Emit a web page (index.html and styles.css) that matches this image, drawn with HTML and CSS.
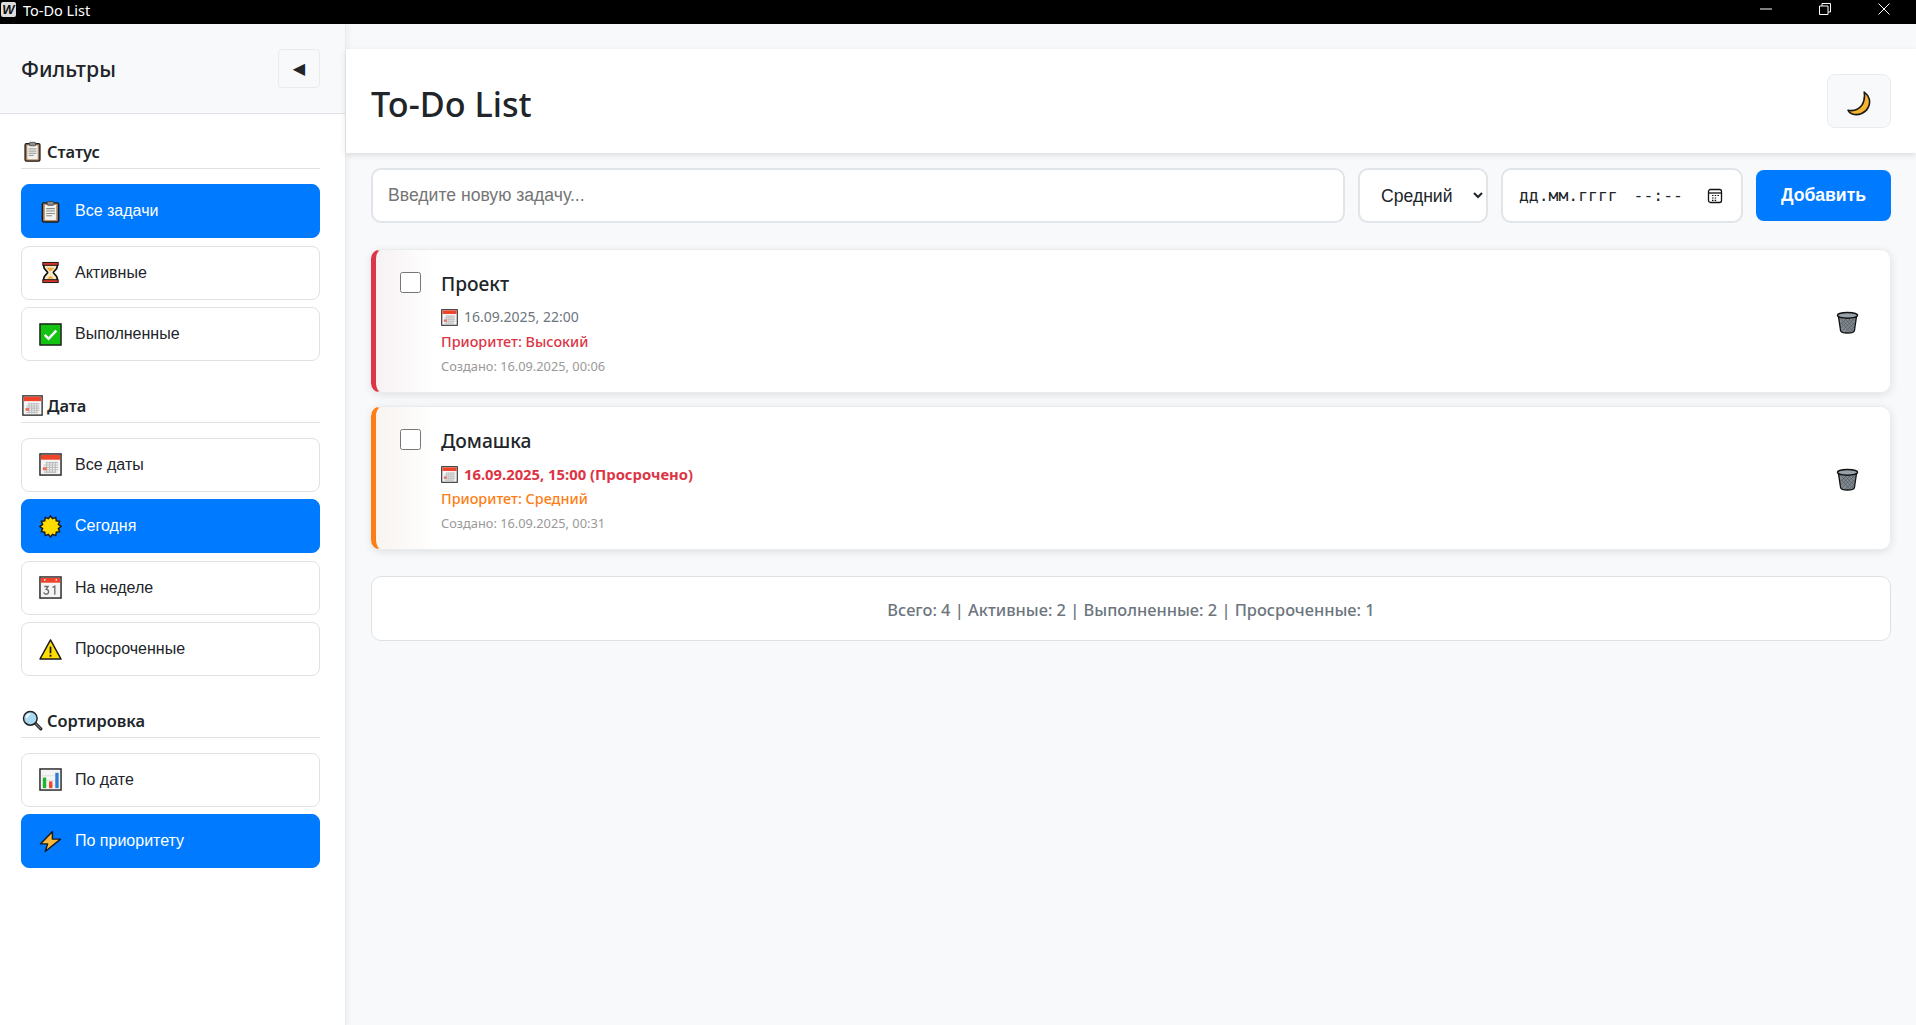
FILE: index.html
```html
<!DOCTYPE html>
<html lang="ru">
<head>
    <meta charset="UTF-8">
    <meta name="viewport" content="width=device-width, initial-scale=1.0">
    <title>To-Do List</title>
    <link rel="stylesheet" href="styles.css">
</head>
<body>
    <svg class="icon-defs" xmlns="http://www.w3.org/2000/svg">
        <symbol id="i-clipboard" viewBox="0 0 24 24">
            <rect x="3.500" y="3" width="17" height="20" rx="1.500" fill="#a9805a" stroke="#1c1c1c" stroke-width="1.500"/>
            <rect x="6" y="5" width="12" height="16" fill="#f2f2ee"/>
            <rect x="8.500" y="1.500" width="7" height="4" rx="1" fill="#8a8f94" stroke="#333" stroke-width=".8"/>
            <path d="M7.500 9h9M7.500 11.500h9M7.500 14h9M7.500 16.500h6" stroke="#8d8d8d" stroke-width="1.100"/>
        </symbol>
        <symbol id="i-hourglass" viewBox="0 0 24 24">
            <path d="M5 3h14v3c0 3-4 4.500-4 6s4 3 4 6v3H5v-3c0-3 4-4.500 4-6S5 9 5 6z" fill="#f6e7c6" stroke="#111" stroke-width="1.800"/>
            <rect x="4" y="1.500" width="16" height="3" fill="#d8362a" stroke="#111" stroke-width="1"/>
            <rect x="4" y="19.500" width="16" height="3" fill="#d8362a" stroke="#111" stroke-width="1"/>
            <path d="M8 7h8l-3 3.500h-2zM8.500 18.500l3.500-3 3.500 3z" fill="#f3a93a"/>
        </symbol>
        <symbol id="i-check" viewBox="0 0 24 24">
            <rect x="1" y="1" width="22" height="22" fill="#14c214" stroke="#1c1c1c" stroke-width="1.500"/>
            <path d="M6 12.500l4 4 8-8.500" fill="none" stroke="#fff" stroke-width="2.600"/>
        </symbol>
        <symbol id="i-calendar" viewBox="0 0 24 24">
            <rect x="1" y="1" width="22" height="22" fill="#f4f4f4" stroke="#262626" stroke-width="1.500"/>
            <rect x="2" y="2" width="20" height="5" fill="#f0442a"/>
            <path d="M7 10h13M5 12.500h15M5 15h15M5 17.500h15M5 20h13M8 9v12M11 9v12M14 9v12M17 9v12" stroke="#bdbdbd" stroke-width="1.200"/>
            <rect x="4" y="15" width="4" height="3" fill="#ee6a5a"/>
        </symbol>
        <symbol id="i-week" viewBox="0 0 24 24">
            <rect x="1" y="1" width="22" height="22" fill="#f4f4f4" stroke="#262626" stroke-width="1.500"/>
            <rect x="2" y="2" width="20" height="5" fill="#f0442a"/>
            <path d="M6 3v2M18 3v2" stroke="#fff" stroke-width="1.200"/>
            <path d="M5.500 11h4l-2 3c1.800 0 2.500 1 2.500 2.500s-1 2.500-2.500 2.500-2.300-.8-2.500-1.800M14 12l2.500-1.500V19.500" fill="none" stroke="#6d6d6d" stroke-width="1.400"/>
        </symbol>
        <symbol id="i-sun" viewBox="0 0 24 24">
            <polygon fill="#ffdc00" stroke="#1a1a1a" stroke-width="1.500" points="23,12 20.200,14.200 21.500,17.500 18,18 17.500,21.500 14.200,20.200 12,23 9.800,20.200 6.500,21.500 6,18 2.500,17.500 3.800,14.200 1,12 3.800,9.800 2.500,6.500 6,6 6.500,2.500 9.800,3.800 12,1 14.200,3.800 17.500,2.500 18,6 21.500,6.500 20.200,9.800"/>
        </symbol>
        <symbol id="i-warning" viewBox="0 0 24 24">
            <path d="M12 2l11 20H1z" fill="#ffdd00" stroke="#1a1a1a" stroke-width="1.500" stroke-linejoin="round"/>
            <path d="M12 9v7" stroke="#1a1a1a" stroke-width="1.800"/>
            <rect x="11" y="17.500" width="2" height="2" fill="#1a1a1a"/>
        </symbol>
        <symbol id="i-search" viewBox="0 0 24 24">
            <path d="M14.500 14.500l7 7" stroke="#222" stroke-width="3.600" stroke-linecap="round"/>
            <path d="M15 15l6 6" stroke="#7a7f85" stroke-width="1.400" stroke-linecap="round"/>
            <circle cx="9.500" cy="9.500" r="7.800" fill="#a9d9f2" stroke="#222" stroke-width="1.700"/>
            <path d="M5 9c.5-2.500 2-4 4.500-4.500" fill="none" stroke="#fff" stroke-width="1.800"/>
        </symbol>
        <symbol id="i-chart" viewBox="0 0 24 24">
            <rect x="1" y="1" width="22" height="22" fill="#f4f4f4" stroke="#262626" stroke-width="1.500"/>
            <path d="M3 8h18M3 13h18M3 18h18" stroke="#dcdcdc" stroke-width=".8"/>
            <rect x="4" y="10" width="3.500" height="11" fill="#1cb52c"/>
            <rect x="10.500" y="14" width="3.500" height="7" fill="#ee4527"/>
            <rect x="17" y="5" width="3.500" height="16" fill="#2a7fd0"/>
        </symbol>
        <symbol id="i-bolt" viewBox="0 0 24 24">
            <path d="M14 1.500L1.500 14.500h7.500L6.500 22.500 22.500 9.500h-8.500z" fill="#f9b93a" stroke="#1a1a1a" stroke-width="1.500" stroke-linejoin="round"/>
        </symbol>
        <symbol id="i-moon" viewBox="0 0 24 24">
            <path d="M16.500 1c5 3.500 6.500 9.500 4 14.500C18 21 11 24 5 22c-2-.7-3.500-2-4-3.500 5 1 10-.5 13-4.500 2.500-3.500 3.200-8.500 2.500-13z" fill="#f6b42f" stroke="#1a1a1a" stroke-width="1.500" stroke-linejoin="round"/>
        </symbol>
        <symbol id="i-trash" viewBox="0 0 24 24">
            <path d="M2.500 5l2.300 15.500c.3 1.500 3.500 2.500 7.200 2.500s6.900-1 7.200-2.500L21.500 5z" fill="#808990" stroke="#111" stroke-width="1.400"/>
            <path d="M5 8l13 13M9 8l11 11M13 8l7 7M17 8l3 3M5 12l10 10M19 8L6 21M15 8L4.500 18.500M11 8l-6 6M19.500 12L9 22.500M19.500 16l-6 6.500" stroke="#4b5156" stroke-width=".6"/>
            <ellipse cx="12" cy="4.500" rx="10.500" ry="3" fill="#98a1a8" stroke="#111" stroke-width="1.500"/>
        </symbol>
    </svg>

    <div class="titlebar">
        <div class="titlebar-name">
            <span class="app-logo">W</span>
            <span>To-Do List</span>
        </div>
        <div class="win-controls">
            <svg class="win-icon" viewBox="0 0 12 12"><path d="M0 6h12" stroke="#fff" fill="none"/></svg>
            <svg class="win-icon" viewBox="0 0 12 12"><path d="M.5 3h8.500v8.500H.5zM3 3V.5h8.500V9H9" stroke="#fff" fill="none"/></svg>
            <svg class="win-icon" viewBox="0 0 12 12"><path d="M.5.500l11 11M11.500.500l-11 11" stroke="#fff" fill="none"/></svg>
        </div>
    </div>

    <div class="app">
        <aside class="sidebar">
            <div class="sidebar-head">
                <h2>Фильтры</h2>
                <button class="collapse-btn" type="button">◀</button>
            </div>
            <div class="sidebar-body">
                <section class="filter-group">
                    <h3><svg class="emoji-sm"><use href="#i-clipboard"/></svg>Статус</h3>
                    <button class="filter-btn active" type="button"><svg class="emoji"><use href="#i-clipboard"/></svg>Все задачи</button>
                    <button class="filter-btn" type="button"><svg class="emoji"><use href="#i-hourglass"/></svg>Активные</button>
                    <button class="filter-btn" type="button"><svg class="emoji"><use href="#i-check"/></svg>Выполненные</button>
                </section>
                <section class="filter-group">
                    <h3><svg class="emoji-sm"><use href="#i-calendar"/></svg>Дата</h3>
                    <button class="filter-btn" type="button"><svg class="emoji"><use href="#i-calendar"/></svg>Все даты</button>
                    <button class="filter-btn active" type="button"><svg class="emoji"><use href="#i-sun"/></svg>Сегодня</button>
                    <button class="filter-btn" type="button"><svg class="emoji"><use href="#i-week"/></svg>На неделе</button>
                    <button class="filter-btn" type="button"><svg class="emoji"><use href="#i-warning"/></svg>Просроченные</button>
                </section>
                <section class="filter-group">
                    <h3><svg class="emoji-sm"><use href="#i-search"/></svg>Сортировка</h3>
                    <button class="filter-btn" type="button"><svg class="emoji"><use href="#i-chart"/></svg>По дате</button>
                    <button class="filter-btn active" type="button"><svg class="emoji"><use href="#i-bolt"/></svg>По приоритету</button>
                </section>
            </div>
        </aside>

        <main class="main">
            <header class="page-head">
                <h1>To-Do List</h1>
                <button class="theme-btn" type="button"><svg class="emoji"><use href="#i-moon"/></svg></button>
            </header>

            <div class="content">
                <form class="task-form">
                    <input class="task-input" type="text" placeholder="Введите новую задачу...">
                    <select class="task-priority">
                        <option>Высокий</option>
                        <option selected>Средний</option>
                        <option>Низкий</option>
                    </select>
                    <div class="task-date">
                        <span>дд.мм.гггг --:--</span>
                        <svg class="date-icon" viewBox="0 0 16 16">
                            <rect x="1.500" y="1.500" width="13" height="13" rx="2" fill="none" stroke="#111" stroke-width="1.300"/>
                            <path d="M2 5h12" stroke="#111" stroke-width="1.300"/>
                            <path d="M5 7.500h1.500M7.700 7.500h1.500M10.400 7.500h1.500M5 10h1.500M7.700 10h1.500M5 12.300h1.500M7.700 12.300h1.500" stroke="#111" stroke-width="1.200"/>
                        </svg>
                    </div>
                    <button class="add-btn" type="button">Добавить</button>
                </form>

                <div class="task high">
                    <input class="task-check" type="checkbox">
                    <div class="task-info">
                        <div class="task-title">Проект</div>
                        <div class="task-deadline"><svg class="emoji-xs"><use href="#i-calendar"/></svg>16.09.2025, 22:00</div>
                        <div class="task-level">Приоритет: Высокий</div>
                        <div class="task-created">Создано: 16.09.2025, 00:06</div>
                    </div>
                    <button class="delete-btn" type="button"><svg class="emoji"><use href="#i-trash"/></svg></button>
                </div>

                <div class="task medium">
                    <input class="task-check" type="checkbox">
                    <div class="task-info">
                        <div class="task-title">Домашка</div>
                        <div class="task-deadline overdue"><svg class="emoji-xs"><use href="#i-calendar"/></svg>16.09.2025, 15:00 (Просрочено)</div>
                        <div class="task-level">Приоритет: Средний</div>
                        <div class="task-created">Создано: 16.09.2025, 00:31</div>
                    </div>
                    <button class="delete-btn" type="button"><svg class="emoji"><use href="#i-trash"/></svg></button>
                </div>

                <div class="stats">Всего: 4 | Активные: 2 | Выполненные: 2 | Просроченные: 1</div>
            </div>
        </main>
    </div>
</body>
</html>
```

FILE: styles.css
```css
* {
    box-sizing: border-box;
}

body {
    margin: 0;
    height: 1025px;
    overflow: hidden;
    display: flex;
    flex-direction: column;
    font-family: "Noto Sans", "Open Sans", sans-serif;
    background-color: #f8f9fa;
    color: #212529;
}

.icon-defs {
    display: none;
}

.titlebar {
    height: 24px;
    flex: none;
    background-color: #000;
    color: #fff;
    display: flex;
    justify-content: space-between;
    font-size: 14.5px;
}

.titlebar-name {
    display: flex;
    align-items: center;
    gap: 7px;
    padding-left: 1px;
    padding-bottom: 5px;
}

.app-logo {
    width: 15px;
    height: 15px;
    background-color: #ddd;
    color: #111;
    font: italic bold 13px/15px "Liberation Sans", sans-serif;
    text-align: center;
    border-radius: 2px;
}

.win-controls {
    display: flex;
    gap: 47px;
    padding: 3px 26px 0 0;
}

.win-icon {
    width: 12px;
    height: 12px;
}

.app {
    flex: 1;
    display: flex;
    min-height: 0;
}

.sidebar {
    width: 346px;
    flex: none;
    background-color: #fff;
    border-right: 1px solid #e9ecef;
    box-shadow: 2px 0 6px rgba(0, 0, 0, 0.05);
}

.sidebar-head {
    height: 90px;
    padding: 0 25px 0 21px;
    background-color: #f8f9fa;
    border-bottom: 1px solid #dee2e6;
    display: flex;
    align-items: center;
    justify-content: space-between;
}

.sidebar-head h2 {
    margin: 0;
    font-size: 21.3px;
    font-weight: 500;
}

.collapse-btn {
    width: 42px;
    height: 39px;
    padding: 0;
    background-color: #f8f9fa;
    border: 1px solid #e9ecef;
    border-radius: 4px;
    color: #212529;
    font: 16px "DejaVu Sans", sans-serif;
}

.sidebar-body {
    padding: 27px 25px 0 21px;
    display: flex;
    flex-direction: column;
    gap: 33.5px;
}

.filter-group {
    display: flex;
    flex-direction: column;
    gap: 7.5px;
}

.filter-group h3 {
    height: 28px;
    margin: 0 0 7.5px;
    padding: 0 0 6px 1px;
    border-bottom: 1px solid #dee2e6;
    display: flex;
    align-items: center;
    gap: 4px;
    font-size: 16.4px;
    font-weight: 600;
}

.emoji-sm {
    width: 21px;
    height: 21px;
    flex: none;
}

.emoji {
    width: 23px;
    height: 23px;
    flex: none;
}

.emoji-xs {
    width: 17px;
    height: 17px;
    flex: none;
}

.filter-btn {
    height: 54px;
    padding: 0 0 0 17px;
    background-color: #fff;
    border: 1px solid #dee2e6;
    border-radius: 8px;
    color: #212529;
    display: flex;
    align-items: center;
    gap: 13px;
    font: 16px "Liberation Sans", sans-serif;
}

.filter-btn.active {
    background-color: #007bff;
    border-color: #007bff;
    color: #fff;
}

.main {
    flex: 1;
    min-width: 0;
    padding-top: 25px;
}

.page-head {
    height: 104px;
    padding: 0 25px;
    background-color: #fff;
    box-shadow: 0 2px 6px rgba(0, 0, 0, 0.12);
    display: flex;
    align-items: center;
    justify-content: space-between;
}

.page-head h1 {
    margin: 0;
    padding-top: 5px;
    font-size: 34.2px;
    font-weight: 500;
}

.theme-btn {
    width: 64px;
    height: 54px;
    padding: 4px 0 0;
    background-color: #f8f9fa;
    border: 1px solid #e9ecef;
    border-radius: 8px;
    display: flex;
    align-items: center;
    justify-content: center;
}

.theme-btn .emoji {
    width: 25px;
    height: 25px;
}

.content {
    padding: 15px 25px 0;
}

.task-form {
    display: flex;
    align-items: center;
    gap: 13px;
    margin-bottom: 26px;
}

.task-input,
.task-priority,
.task-date {
    height: 55px;
    background-color: #fff;
    border: 2px solid #e1e4e8;
    border-radius: 10px;
    font: 17.6px "Liberation Sans", sans-serif;
    color: #212529;
}

.task-input {
    flex: 1;
    min-width: 0;
    padding: 0 15px;
}

.task-input::placeholder {
    color: #757575;
}

.task-priority {
    width: 130px;
    padding: 0 16px 0 17px;
}

.task-date {
    width: 242px;
    padding: 0 18px 0 16px;
    display: flex;
    align-items: center;
    justify-content: space-between;
    font: 16.4px "DejaVu Sans Mono", monospace;
    word-spacing: 6px;
}

.date-icon {
    width: 16px;
    height: 16px;
}

.add-btn {
    width: 135px;
    height: 51px;
    padding: 0;
    background-color: #007bff;
    border: none;
    border-radius: 8px;
    color: #fff;
    font: bold 17.6px "Liberation Sans", sans-serif;
}

.task {
    height: 144px;
    margin-bottom: 13px;
    padding: 21px 0 0 24px;
    border: 1px solid #e9ecef;
    border-left: 5px solid #dc3545;
    border-radius: 10px;
    background: linear-gradient(90deg, rgba(220, 53, 69, 0.04), #fff 60px);
    box-shadow: 0 2px 8px rgba(0, 0, 0, 0.1);
    display: flex;
    align-items: flex-start;
}

.task.medium {
    border-left-color: #fd7e14;
    background: linear-gradient(90deg, rgba(253, 126, 20, 0.04), #fff 60px);
}

.task-check {
    width: 21px;
    height: 21px;
    margin: 1px 20px 0 0;
    flex: none;
}

.task-info {
    flex: 1;
}

.task-title {
    font-size: 19.2px;
    font-weight: 500;
    line-height: 26px;
    margin-bottom: 9px;
}

.task-deadline {
    display: flex;
    align-items: center;
    gap: 6px;
    font-size: 14px;
    line-height: 22px;
    color: #6c757d;
}

.task-deadline.overdue {
    color: #dc3545;
    font-size: 14.8px;
    font-weight: 700;
}

.task-level {
    font-size: 14.4px;
    font-weight: 500;
    line-height: 24px;
    margin-top: 2px;
    color: #dc3545;
}

.medium .task-level {
    color: #fd7e14;
}

.task-created {
    font-size: 12.8px;
    line-height: 24px;
    color: #999;
}

.delete-btn {
    width: 24px;
    height: 24px;
    margin: 40px 31px 0 0;
    padding: 0;
    background: none;
    border: none;
}

.stats {
    height: 65px;
    margin-top: 26px;
    padding-top: 1px;
    background-color: #fff;
    border: 1px solid #dee2e6;
    border-radius: 10px;
    display: flex;
    align-items: center;
    justify-content: center;
    font-size: 16.4px;
    font-weight: 500;
    color: #6c757d;
}
```
